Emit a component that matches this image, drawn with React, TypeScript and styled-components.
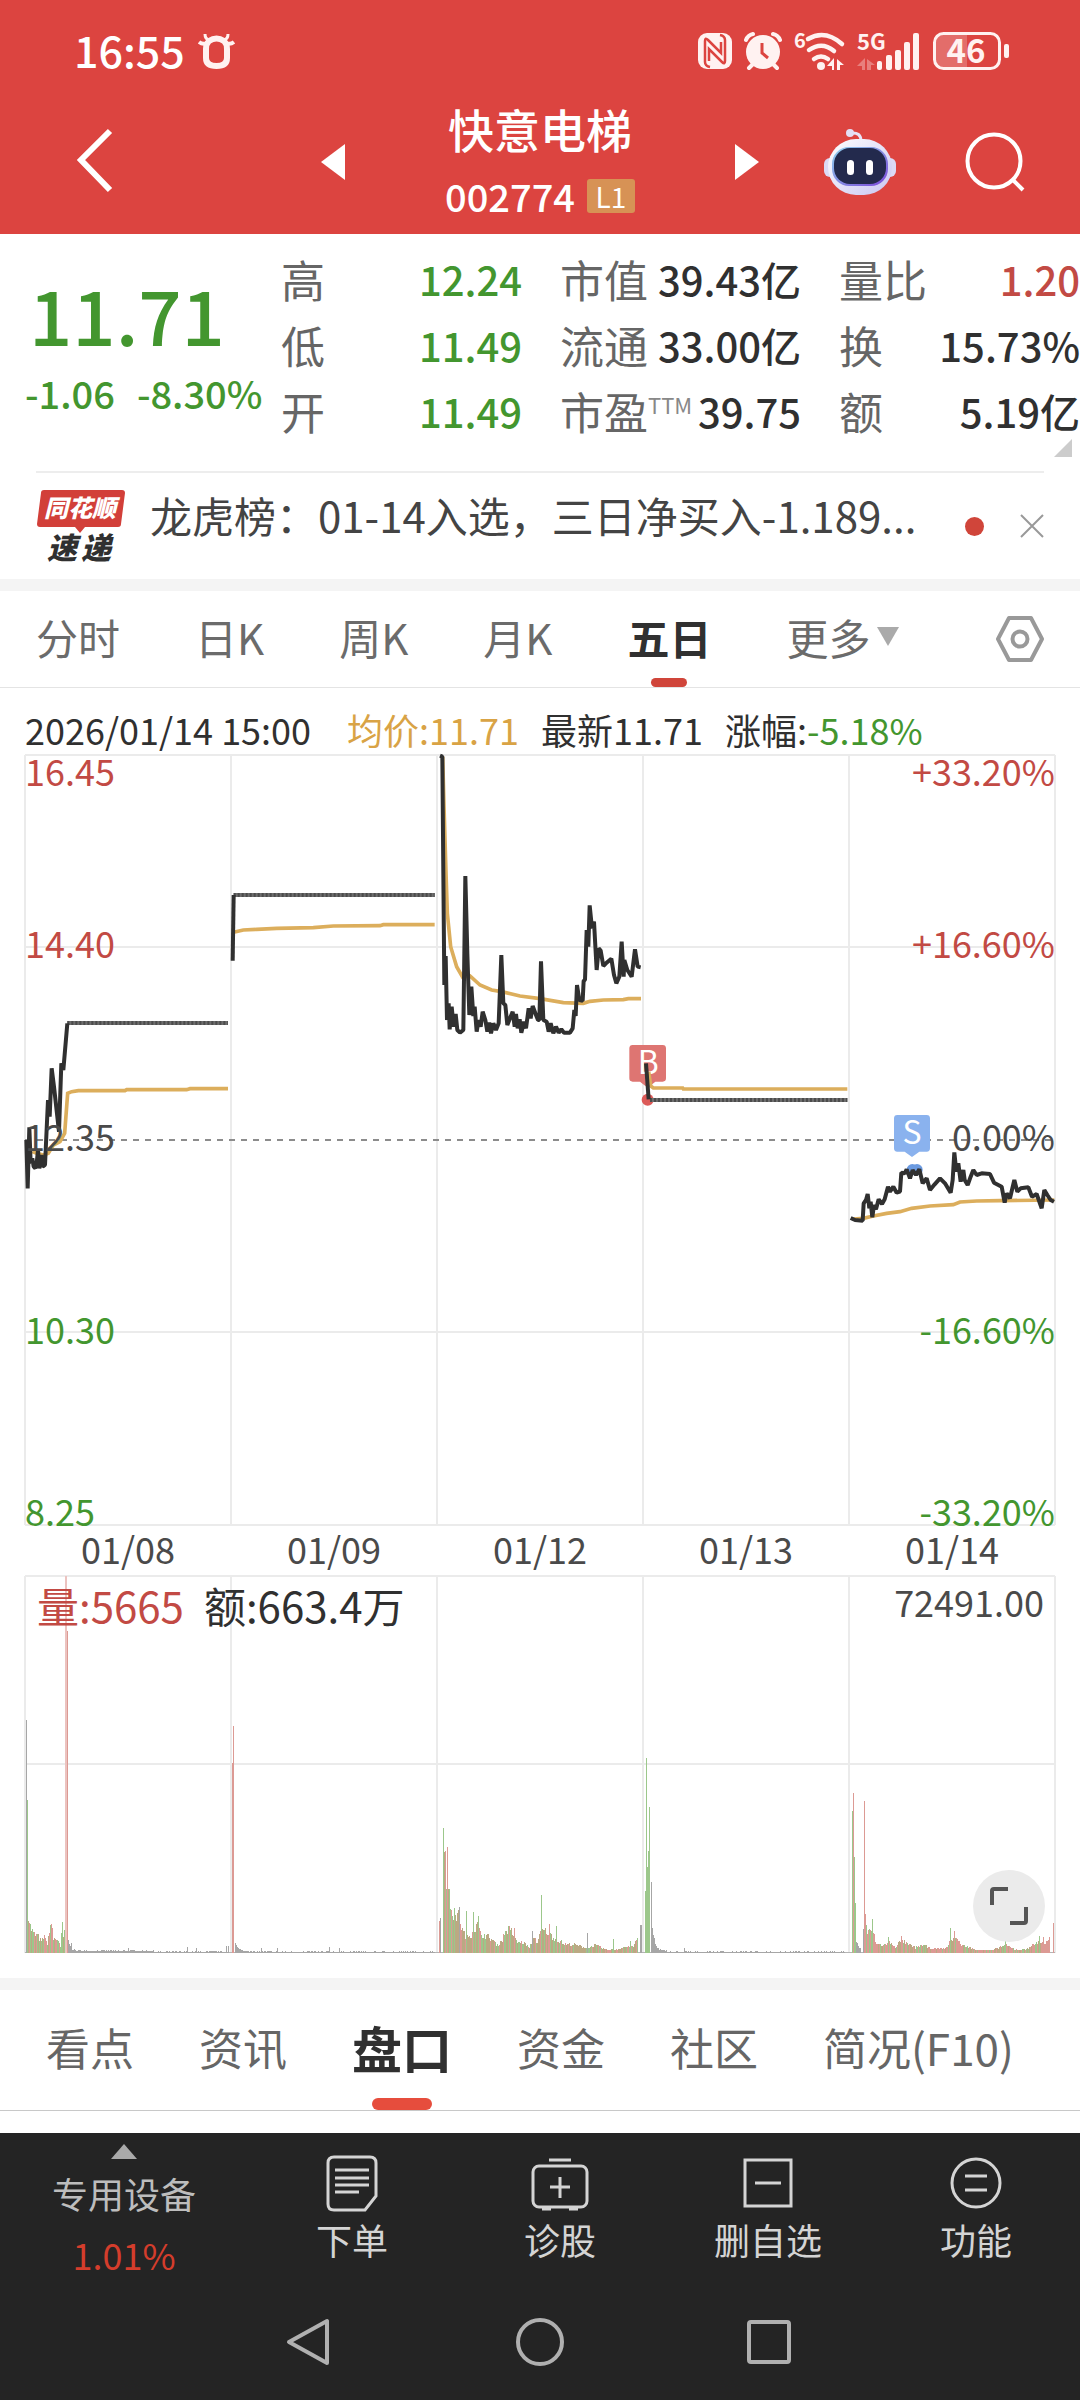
import React, { useState } from "react";
import styled, { createGlobalStyle } from "styled-components";

const RED = "#dc4440";
const UP = "#c24a44";
const DOWN = "#43962f";
const INK = "#303030";

const GlobalStyle = createGlobalStyle`
  * { box-sizing: border-box; }
  body {
    margin: 0;
    background: #fff;
    color: ${INK};
    font-family: "Noto Sans CJK SC", Roboto, sans-serif;
    font-size: 36px;
  }
  h1, dl, dd, dt, p { margin: 0; font-weight: inherit; }
  svg { display: block; flex: none; overflow: visible; }
`;

const Button = styled.button`
  display: flex;
  align-items: center;
  justify-content: center;
  padding: 0;
  border: 0;
  background: none;
  color: inherit;
  font: inherit;
  cursor: pointer;
`;

/* ---------- status bar and title ---------- */

const Top = styled.header`
  background: ${RED};
  color: #fff;
`;

const StatusBar = styled.div`
  display: flex;
  align-items: center;
  justify-content: space-between;
  height: 98px;
  padding: 4px 71px 0 74px;
`;

const StatusGroup = styled.div<{ $gap: number }>`
  display: flex;
  align-items: center;
  gap: ${(p) => p.$gap}px;
`;

const Clock = styled.span`
  padding-bottom: 4px;
  font-size: 43px;
  line-height: 44px;
  font-weight: 500;
`;

const TitleBar = styled.div`
  display: grid;
  grid-template-columns: 1fr auto 1fr;
  align-items: center;
  height: 136px;
  padding: 0 55px 8px;
  column-gap: 20px;
`;

const BackSlot = styled.div`
  display: flex;
  padding-left: 22px;
`;

const TitleActions = styled.div`
  display: flex;
  align-items: center;
  justify-content: flex-end;
  gap: 69px;
`;

const StockSwitch = styled.div`
  display: flex;
  align-items: center;
  gap: 100px;
  height: 100%;
`;

const StockTitle = styled.div`
  display: flex;
  flex-direction: column;
  align-items: center;
  align-self: flex-start;
  gap: 16px;
`;

const StockName = styled.h1`
  font-size: 46px;
  line-height: 60px;
  font-weight: 500;
`;

const StockCode = styled.div`
  display: flex;
  align-items: center;
  gap: 12px;
  font-size: 38px;
  line-height: 44px;
  font-weight: 500;
`;

const Level = styled.span`
  width: 48px;
  border-radius: 3px;
  background: #d79255;
  font-size: 28px;
  line-height: 34px;
  font-weight: 400;
  text-align: center;
`;

/* ---------- quote ---------- */

const Quote = styled.section`
  position: relative;
  display: flex;
  height: 237px;
`;

const PriceBlock = styled.div`
  display: flex;
  flex-direction: column;
  gap: 20px;
  width: 281px;
  padding: 39px 0 0 25px;
  color: ${DOWN};
`;

const Price = styled.strong`
  padding-left: 4px;
  font-size: 76px;
  line-height: 80px;
  font-weight: 500;
`;

const Change = styled.div`
  display: flex;
  gap: 22px;
  font-size: 38px;
  line-height: 40px;
  font-weight: 500;
  white-space: nowrap;
`;

const Stats = styled.dl`
  display: grid;
  flex: 1;
  grid-template-columns: repeat(3, 1fr);
  grid-auto-rows: 66px;
  column-gap: 38px;
  padding-top: 12px;
`;

const Stat = styled.div`
  display: flex;
  align-items: center;
  justify-content: space-between;
  line-height: 66px;
  white-space: nowrap;
`;

const StatLabel = styled.dt`
  display: flex;
  color: #666;
  font-size: 44px;
`;

const Sup = styled.sup`
  color: #888;
  font-size: 22px;
  line-height: 52px;
`;

const StatValue = styled.dd<{ $color?: string }>`
  color: ${(p) => p.$color || INK};
  font-size: 40px;
  font-weight: 500;
`;

const Corner = styled.svg`
  position: absolute;
  right: 8px;
  bottom: 14px;
`;

const News = styled.section`
  display: flex;
  align-items: center;
  height: 108px;
  margin: 0 36px;
  border-top: 2px solid #ededed;
`;

const NewsLink = styled.a`
  flex: 1;
  min-width: 0;
  margin: 0 30px 0 24px;
  padding-bottom: 22px;
  color: #444;
  font-size: 42px;
  line-height: 60px;
  text-decoration: none;
  white-space: nowrap;
`;

const Dot = styled.span`
  width: 19px;
  height: 19px;
  margin-right: 36px;
  border-radius: 50%;
  background: #d0453a;
`;

const Band = styled.div`
  height: 12px;
  background: #f4f4f4;
`;

/* ---------- tabs ---------- */

const PeriodTabs = styled.nav`
  display: flex;
  gap: 75px;
  height: 97px;
  padding: 0 36px;
  border-bottom: 1px solid #e4e4e4;
`;

const PeriodTab = styled(Button)<{ $active?: boolean }>`
  position: relative;
  gap: 7px;
  padding-bottom: 6px;
  color: ${(p) => (p.$active ? INK : "#6b6b6b")};
  font-size: 42px;
  font-weight: ${(p) => (p.$active ? 700 : 400)};
  white-space: nowrap;
  &::after {
    content: "";
    position: absolute;
    left: calc(50% - 18px);
    bottom: 0;
    width: 36px;
    height: 9px;
    border-radius: 5px;
    background: ${(p) => (p.$active ? "#d0453a" : "transparent")};
  }
`;

const Settings = styled(Button)`
  margin-left: auto;
`;

const InfoTabs = styled.nav`
  display: flex;
  gap: 65px;
  height: 121px;
  padding: 0 46px;
  border-bottom: 1px solid #c8c8c8;
`;

const InfoTab = styled(Button)<{ $active?: boolean }>`
  position: relative;
  padding-bottom: 6px;
  color: ${(p) => (p.$active ? INK : "#666")};
  font-size: ${(p) => (p.$active ? 50 : 44)}px;
  font-weight: ${(p) => (p.$active ? 700 : 400)};
  white-space: nowrap;
  &::after {
    content: "";
    position: absolute;
    left: calc(50% - 30px);
    bottom: 0;
    width: 60px;
    height: 12px;
    border-radius: 6px;
    background: ${(p) => (p.$active ? "#e64d3d" : "transparent")};
  }
`;

/* ---------- charts ---------- */

const ChartPanel = styled.section`
  padding: 20px 25px 25px;
`;

const Readout = styled.div`
  display: flex;
  gap: 22px;
  height: 47px;
  line-height: 42px;
  white-space: nowrap;
`;

const ReadoutItem = styled.span<{ $color?: string }>`
  color: ${(p) => p.$color || INK};
`;

const ReadoutTime = styled.time`
  margin-right: 14px;
`;

const Plot = styled.div`
  position: relative;
  & > svg { width: 100%; height: auto; }
`;

const AxisLabel = styled.span<{ $top: number; $color: string; $right?: boolean }>`
  position: absolute;
  top: ${(p) => p.$top}%;
  ${(p) => (p.$right ? "right: 0;" : "left: 0;")}
  margin-top: -21px;
  color: ${(p) => p.$color};
  line-height: 36px;
`;

const Dates = styled.div`
  display: grid;
  grid-template-columns: repeat(5, 1fr);
  height: 51px;
  color: #4a4a4a;
  line-height: 47px;
  text-align: center;
`;

const VolumeHead = styled.div`
  position: absolute;
  inset: 0 11px auto 12px;
  display: flex;
  gap: 20px;
  font-size: 42px;
  line-height: 58px;
`;

const VolumeMax = styled.span`
  margin-left: auto;
  color: #4a4a4a;
  font-size: 36px;
  line-height: 50px;
`;

const Expand = styled(Button)`
  position: absolute;
  right: 10px;
  bottom: 11px;
  width: 72px;
  height: 72px;
  border-radius: 50%;
  background: #ebebeb;
`;

/* ---------- bottom dock ---------- */

const Dock = styled.footer`
  margin-top: 22px;
  background: #242424;
  color: #d4d4d4;
`;

const DockRow = styled.div`
  display: grid;
  grid-template-columns: 248fr 208fr 208fr 208fr 208fr;
  height: 150px;
`;

const DockButton = styled(Button)`
  flex-direction: column;
  justify-content: flex-start;
  gap: 4px;
  padding-top: 20px;
  font-size: 36px;
  line-height: 44px;
`;

const IndexButton = styled(Button)`
  flex-direction: column;
  justify-content: flex-start;
  gap: 12px;
  padding-top: 11px;
  color: #bdbdbd;
  line-height: 44px;
`;

const IndexChange = styled.span`
  padding-top: 5px;
  color: #d43d2c;
`;

const SystemNav = styled.nav`
  display: flex;
  justify-content: center;
  gap: 183px;
  height: 117px;
  padding-right: 4px;
`;

/* ---------- price data, in thirds of a pixel ---------- */

const GRID_X = [0, 206, 412, 618, 824, 1030];

const DAYS = [
  {
    shift: "translate(-25 -15) scale(.33333)",
    price:
      "79,1200 83,1345 88,1162 92,1270 97,1255 101,1280 106,1285 110,1270 114,1230 118,1285 124,1245 128,1280 135,1275 144,1080 149,1130 155,985 162,1040 177,1175 184,970 190,990 202,850",
    flat: [202, 684, 849],
    avg: "97,1235 110,1240 130,1245 145,1240 160,1215 180,1205 194,1180 203,1060 215,1055 235,1052 375,1052 380,1049 560,1049 570,1046 684,1046",
  },
  {
    shift: "translate(-25 -15) scale(.33333)",
    price: "698,662 701,465",
    flat: [701, 1304, 465],
    avg: "704,576 730,570 770,568 830,565 940,563 1000,558 1140,557 1150,554 1304,554",
  },
  {
    shift: "translate(395 -15) scale(.33333)",
    price:
      "60,47 67,50 70,400 73,735 77,648 81,840 86,790 89,868 95,800 101,860 107,822 112,870 120,878 130,870 136,408 142,640 148,825 154,740 160,828 164,800 170,875 176,840 182,860 188,815 196,840 202,875 208,848 213,880 220,850 228,870 236,850 244,645 250,790 256,795 262,855 270,835 278,815 284,860 288,822 293,865 299,838 304,878 312,845 318,865 326,805 332,835 338,798 348,825 354,840 358,840 363,664 370,840 380,845 386,875 392,850 400,880 408,860 416,878 424,868 432,878 450,878 458,865 463,810 467,828 471,735 478,780 488,782 491,722 495,720 500,570 505,620 509,496 516,565 522,545 530,690 536,625 542,632 550,678 558,670 574,656 582,705 589,730 598,710 605,605 611,710 613,660 622,690 635,710 645,628 653,680 662,682",
    avg: "68,50 72,200 78,400 82,520 92,620 110,680 128,712 150,708 180,735 215,750 245,755 300,768 360,776 430,788 490,790 510,784 550,780 610,779 625,776 663,776",
  },
  {
    shift: "translate(575 245) scale(.33333)",
    price: "138,190 146,298",
    flat: [150, 742, 300],
    avg: "146,215 152,258 160,264 248,264 250,267 742,267",
  },
  {
    shift: "translate(575 245) scale(.33333)",
    price:
      "752,654 765,660 788,662 791,610 798,600 803,582 808,625 812,605 817,652 822,615 828,628 836,598 846,612 854,598 864,560 870,575 880,560 890,578 900,575 904,518 914,520 920,508 930,535 938,510 948,525 958,508 968,550 980,535 990,570 1004,553 1020,535 1035,550 1052,578 1058,540 1063,457 1069,515 1075,490 1082,545 1090,510 1094,540 1103,555 1112,530 1120,510 1130,525 1145,520 1170,522 1182,548 1205,560 1214,608 1220,580 1230,595 1243,540 1252,575 1262,565 1285,562 1296,590 1310,582 1325,625 1333,570 1342,585 1352,600 1362,605",
    avg: "760,657 790,655 820,648 860,640 900,635 935,625 990,618 1060,614 1080,606 1130,603 1200,602 1363,600",
  },
];

function PriceChart() {
  return (
    <svg viewBox="0 0 1030 770" role="img" aria-label="五日走势">
      <g stroke="#ebebeb" strokeWidth="2">
        {[0, 192, 577, 770].map((y) => (
          <line key={y} x1="0" x2="1030" y1={y} y2={y} />
        ))}
        {GRID_X.map((x) => (
          <line key={x} x1={x} x2={x} y1="0" y2="770" />
        ))}
      </g>
      <line x1="0" x2="1030" y1="385" y2="385" stroke="#8c8c8c" strokeWidth="2" strokeDasharray="6 6" />
      <g transform="translate(575 245) scale(.33333)">
        <path
          d="M98 135h90q10 0 10 10v90q0 10-10 10h-22l-23 18-23-18h-22q-10 0-10-10v-90q0-10 10-10z"
          fill="#de7572"
        />
        <text x="145" y="221" fill="#fff" fontSize="96" textAnchor="middle">B</text>
        <circle cx="143" cy="299" r="18" fill="#dc5a58" />
        <path
          d="M892 345h88q10 0 10 10v90q0 10-10 10h-22l-22 16-22-16h-22q-10 0-10-10v-90q0-10 10-10z"
          fill="#8ab2ee"
        />
        <text x="936" y="432" fill="#fff" fontSize="96" textAnchor="middle">S</text>
        <circle cx="937" cy="509" r="17" fill="#6b9ae0" />
        <circle cx="951" cy="509" r="17" fill="#6b9ae0" />
      </g>
      {DAYS.map((d, i) => (
        <g key={i} transform={d.shift} fill="none">
          <polyline points={d.avg} stroke="#dcae5c" strokeWidth="11" />
          {d.flat && (
            <>
              <line x1={d.flat[0]} x2={d.flat[1]} y1={d.flat[2]} y2={d.flat[2]} stroke="#6e6e6e" strokeWidth="12" />
              <line
                x1={d.flat[0]}
                x2={d.flat[1]}
                y1={d.flat[2]}
                y2={d.flat[2]}
                stroke="#4c4c4c"
                strokeWidth="12"
                strokeDasharray="6 6"
              />
            </>
          )}
          <polyline points={d.price} stroke="#303030" strokeWidth="12" strokeLinejoin="bevel" />
        </g>
      ))}
    </svg>
  );
}

/* ---------- volume data ---------- */

type Tone = "r" | "g" | "k" | "p" | "b";
const TONES: Record<Tone, string> = {
  r: "#dc9a94",
  g: "#9cc78b",
  k: "#a6a6a6",
  p: "#ecc3c0",
  b: "#bba983",
};

/* [x, height] outline of the crowded bars, and which tones they mix */
const OUTLINES: { mix: Tone[]; points: [number, number][] }[] = [
  {
    mix: ["r", "g", "b"],
    points: [[3, 46], [5, 30], [8, 22], [12, 20], [16, 13], [20, 20], [22, 8], [24, 28], [26, 34], [28, 16], [33, 15], [35, 6], [37, 34], [38, 18], [41, 30]],
  },
  { mix: ["k"], points: [[43, 14], [46, 4], [52, 2], [204, 1]] },
  { mix: ["k"], points: [[210, 10], [214, 3], [226, 1], [410, 1]] },
  {
    mix: ["g", "r", "b", "b"],
    points: [
      [418, 120], [420, 100], [422, 74], [425, 56], [428, 44], [433, 42], [437, 26], [441, 18], [446, 22], [452, 32],
      [455, 22], [462, 19], [468, 14], [472, 9], [477, 16], [481, 27], [486, 25], [491, 13], [500, 11], [504, 5],
      [508, 20], [512, 12], [516, 26], [522, 24], [530, 16], [540, 10], [551, 9], [562, 6], [570, 9], [580, 4],
      [592, 4], [600, 7], [608, 7], [613, 20],
    ],
  },
  { mix: ["k"], points: [[627, 26], [631, 8], [634, 3], [644, 1], [820, 1]] },
  { mix: ["k"], points: [[831, 12], [834, 6], [836, 6]] },
  {
    mix: ["g", "r", "b", "r"],
    points: [
      [840, 46], [842, 22], [847, 28], [851, 10], [858, 9], [864, 12], [870, 7], [876, 15], [882, 10], [890, 6],
      [897, 9], [906, 5], [920, 5], [929, 20], [936, 9], [950, 4], [966, 3], [980, 9], [990, 4], [1000, 4],
      [1006, 8], [1014, 13], [1020, 11], [1025, 18],
    ],
  },
];

const SPIKES: [number, number, Tone, number?][] = [
  [1, 233, "k"], [2, 153, "g"], [40, 377, "p", 2], [42, 322, "r"], [46, 10, "k"],
  [103, 5, "k"], [162, 6, "k"], [171, 5, "k"], [201, 7, "k"], [203, 7, "k"],
  [207, 190, "r"], [208, 227, "r"], [236, 5, "k"], [252, 5, "k"], [304, 6, "k"], [314, 5, "k"],
  [414, 32, "r"], [415, 35, "k"], [418, 125, "g"], [420, 102, "r"], [422, 106, "r"], [434, 46, "k"],
  [441, 42, "g"], [448, 41, "g"], [453, 37, "g"], [484, 27, "r"], [489, 25, "r"], [507, 22, "k"], [516, 58, "g"],
  [524, 29, "r"], [531, 27, "g"], [562, 20, "k"], [588, 14, "g"], [605, 12, "g"], [615, 28, "k", 2],
  [620, 62, "g"], [621, 195, "g"], [622, 86, "g"], [623, 102, "g"], [624, 146, "g"], [626, 71, "k"], [659, 5, "k"],
  [827, 142, "g"], [828, 160, "r"], [829, 96, "g"], [830, 50, "g"], [838, 24, "k"], [839, 152, "r"],
  [847, 34, "g"], [863, 16, "g"], [876, 17, "r"], [925, 25, "g"], [929, 22, "r"], [980, 14, "g"],
  [1014, 17, "g"], [1018, 16, "r"], [1028, 30, "r"],
];

function buildBars() {
  let seed = 7;
  const random = () => {
    seed = (seed * 16807) % 2147483647;
    return seed / 2147483647;
  };
  const bars: { x: number; h: number; tone: Tone; w: number }[] = [];
  OUTLINES.forEach(({ mix, points }) => {
    for (let i = 0; i < points.length - 1; i++) {
      const [x0, h0] = points[i];
      const [x1, h1] = points[i + 1];
      for (let x = x0; x < x1; x++) {
        const level = h0 + ((h1 - h0) * (x - x0)) / (x1 - x0);
        const h = level <= 3 ? Math.max(1, Math.round(level)) + (random() > 0.7 ? 1 : 0) : Math.round(level * (0.7 + random() * 0.35));
        bars.push({ x, h, tone: mix[Math.floor(random() * mix.length)], w: 1 });
      }
    }
  });
  SPIKES.forEach(([x, h, tone, w = 1]) => bars.push({ x, h, tone, w }));
  return bars;
}

const BARS = buildBars();

function VolumeChart() {
  return (
    <svg viewBox="0 0 1030 377" role="img" aria-label="成交量">
      <g stroke="#ebebeb" strokeWidth="2">
        <line x1="0" x2="1030" y1="0" y2="0" />
        <line x1="0" x2="1030" y1="188" y2="188" />
        {GRID_X.map((x) => (
          <line key={x} x1={x} x2={x} y1="0" y2="377" />
        ))}
      </g>
      <rect x="0" y="376" width="1030" height="1" fill="#b4b4b4" />
      {BARS.map((b, i) => (
        <rect key={i} x={b.x} y={377 - b.h} width={b.w} height={b.h} fill={TONES[b.tone]} />
      ))}
    </svg>
  );
}

/* ---------- icons ---------- */

const CowIcon = () => (
  <svg width="35" height="36" viewBox="0 0 35 36" fill="none" stroke="#fff2f1">
    <path d="M6 1q0 5 4 6M29 1q0 5-4 6" strokeWidth="3" />
    <path d="M0 9q4 3 8 1M35 9q-4 3-8 1" strokeWidth="4" />
    <path d="M10 8Q17.500 3 25 8q3 3 3 8v9q0 8-10.500 8T7 25v-9q0-5 3-8z" strokeWidth="6" />
  </svg>
);

const NfcIcon = () => (
  <svg width="34" height="36" viewBox="0 0 34 36">
    <rect width="34" height="36" rx="9" fill="#fff2f1" />
    <path
      d="M12 34q-5-1-5-5V8q0-4 3-1l13 13V9M22 2q5 1 5 5v21q0 4-3 1L11 16v12"
      fill="none"
      stroke={RED}
      strokeWidth="2.500"
    />
  </svg>
);

const AlarmIcon = () => (
  <svg width="38" height="38" viewBox="0 0 38 38" fill="none" stroke="#fff2f1" strokeLinecap="round">
    <circle cx="19" cy="20" r="17" fill="#fff2f1" stroke="none" />
    <path d="M2 8q2-5 7-6M36 8q-2-5-7-6" strokeWidth="4" />
    <path d="m9 32-4 4M29 32l4 4" strokeWidth="4" />
    <path d="M18 11v10l6 5" stroke={RED} strokeWidth="3" strokeLinecap="butt" />
  </svg>
);

const WifiIcon = () => (
  <svg width="51" height="40" viewBox="0 0 51 40" fill="none" stroke="#fff2f1" strokeLinecap="round">
    <text x="0" y="17" fontSize="20" fontWeight="700" fill="#fff2f1" stroke="none">6</text>
    <path d="M14 8q17-10 34 5M15 19q13-9 25 1M20 28q7-5 14 0" strokeWidth="4.500" />
    <circle cx="27" cy="35" r="4" fill="#fff2f1" stroke="none" />
    <path d="M40 27v12h-2v-4h-5zM43 39V28l7 6h-4v5z" fill="#fff2f1" stroke="none" />
  </svg>
);

const SignalIcon = () => (
  <svg width="64" height="40" viewBox="0 0 64 40" fill="#fff2f1">
    <text x="0" y="19" fontSize="22" fontWeight="700">5G</text>
    <path d="M8 27v12H5v-4H0zM10 39V28l8 6h-4v5z" opacity=".35" />
    <rect x="20" y="30" width="5" height="9" rx="2" />
    <rect x="29" y="24" width="6" height="15" rx="2" />
    <rect x="38" y="19" width="6" height="20" rx="2" />
    <rect x="47" y="11" width="6" height="28" rx="2" />
    <rect x="56" y="2" width="6" height="37" rx="2" />
  </svg>
);

const BatteryIcon = () => (
  <svg width="76" height="38" viewBox="0 0 76 38">
    <path d="M10 3h24v32H10q-7 0-7-7V10q0-7 7-7z" fill="#fff" opacity=".22" />
    <rect x="1.500" y="1.500" width="65" height="35" rx="9" fill="none" stroke="#fff2f1" strokeWidth="3" />
    <rect x="71" y="12" width="5" height="14" rx="2" fill="#fff2f1" />
    <text x="33" y="31" textAnchor="middle" fontSize="33" fontWeight="700" fill="#fff2f1">46</text>
  </svg>
);

const Arrow = ({ flip }: { flip?: boolean }) => (
  <svg width="24" height="36" viewBox="0 0 24 36" fill="#fff">
    <path d={flip ? "M0 0v36l24-18z" : "M24 0v36L0 18z"} />
  </svg>
);

const RobotIcon = () => (
  <svg width="72" height="66" viewBox="0 0 72 66">
    <defs>
      <linearGradient id="shell" x1="0" y1="0" x2="1" y2="1">
        <stop offset="0" stopColor="#fff" />
        <stop offset="1" stopColor="#c9c6f2" />
      </linearGradient>
      <linearGradient id="visor" x1="0" y1="0" x2="1" y2="1">
        <stop offset="0" stopColor="#8fd2ee" />
        <stop offset="1" stopColor="#7a48d8" />
      </linearGradient>
    </defs>
    <path d="M27 4q10-1 10 8" fill="none" stroke="#e8e4f8" strokeWidth="3" />
    <circle cx="26" cy="4" r="4" fill="#e3dff6" />
    <rect x="0" y="29" width="72" height="19" rx="6" fill="#dcdaf6" />
    <rect x="4" y="10" width="64" height="56" rx="28" fill="url(#shell)" />
    <rect x="8" y="18" width="56" height="39" rx="17" fill="url(#visor)" />
    <rect x="10" y="19" width="52" height="36" rx="16" fill="#232a4d" />
    <rect x="23" y="31" width="7" height="15" rx="3.500" fill="#fff" />
    <rect x="42" y="31" width="7" height="15" rx="3.500" fill="#fff" />
  </svg>
);

const ExpressLogo = () => (
  <svg width="90" height="74" viewBox="0 0 90 74" role="img" aria-label="同花顺速递">
    <path d="M8 1h78q3 0 3 3l-4 31q0 3-3 3H49l-5 6-5-6H4q-3 0-3-3L5 4q0-3 3-3z" fill="#d23f39" />
    <text x="44" y="28" textAnchor="middle" fontSize="24" fontWeight="900" fontStyle="italic" fill="#fff">同花顺</text>
    <text x="11" y="70" fontSize="30" fontWeight="900" fontStyle="italic" fill="#303030">速</text>
    <text x="45" y="70" fontSize="30" fontWeight="900" fontStyle="italic" fill="#303030">递</text>
  </svg>
);

/* ---------- page ---------- */

const STATS: { label: string; sup?: string; value: string; color?: string }[] = [
  { label: "高", value: "12.24", color: DOWN },
  { label: "市值", value: "39.43亿" },
  { label: "量比", value: "1.20", color: UP },
  { label: "低", value: "11.49", color: DOWN },
  { label: "流通", value: "33.00亿" },
  { label: "换", value: "15.73%" },
  { label: "开", value: "11.49", color: DOWN },
  { label: "市盈", sup: "TTM", value: "39.75" },
  { label: "额", value: "5.19亿" },
];

const AXIS: { top: number; price: string; pct: string; color: string }[] = [
  { top: 2.3, price: "16.45", pct: "+33.20%", color: UP },
  { top: 24.7, price: "14.40", pct: "+16.60%", color: UP },
  { top: 49.8, price: "12.35", pct: "0.00%", color: "#4a4a4a" },
  { top: 74.8, price: "10.30", pct: "-16.60%", color: DOWN },
  { top: 98.4, price: "8.25", pct: "-33.20%", color: DOWN },
];

const PERIODS = ["分时", "日K", "周K", "月K", "五日", "更多"];
const SECTIONS = ["看点", "资讯", "盘口", "资金", "社区", "简况(F10)"];

export default function App() {
  const [period, setPeriod] = useState("五日");
  const [section, setSection] = useState("盘口");

  return (
    <>
      <GlobalStyle />
      <Top>
        <StatusBar>
          <StatusGroup $gap={14}>
            <Clock>16:55</Clock>
            <CowIcon />
          </StatusGroup>
          <StatusGroup $gap={12}>
            <NfcIcon />
            <AlarmIcon />
            <WifiIcon />
            <SignalIcon />
            <BatteryIcon />
          </StatusGroup>
        </StatusBar>
        <TitleBar>
          <BackSlot>
            <Button aria-label="返回">
              <svg width="36" height="66" viewBox="0 0 36 66" fill="none" stroke="#fff" strokeWidth="6">
                <path d="M33 2 4 31l29 30" />
              </svg>
            </Button>
          </BackSlot>
          <StockSwitch>
            <Button aria-label="上一只"><Arrow /></Button>
            <StockTitle>
              <StockName>快意电梯</StockName>
              <StockCode>002774<Level>L1</Level></StockCode>
            </StockTitle>
            <Button aria-label="下一只"><Arrow flip /></Button>
          </StockSwitch>
          <TitleActions>
            <Button aria-label="智能助手"><RobotIcon /></Button>
            <Button aria-label="搜索">
              <svg width="60" height="60" viewBox="0 0 60 60" fill="none" stroke="#fff" strokeWidth="4">
                <circle cx="29" cy="29" r="26.500" />
                <path d="m47 47 11 11" />
              </svg>
            </Button>
          </TitleActions>
        </TitleBar>
      </Top>

      <Quote>
        <PriceBlock>
          <Price>11.71</Price>
          <Change><span>-1.06</span><span>-8.30%</span></Change>
        </PriceBlock>
        <Stats>
          {STATS.map((s) => (
            <Stat key={s.label}>
              <StatLabel>{s.label}{s.sup && <Sup>{s.sup}</Sup>}</StatLabel>
              <StatValue $color={s.color}>{s.value}</StatValue>
            </Stat>
          ))}
        </Stats>
        <Corner width="18" height="18" viewBox="0 0 18 18"><path d="M18 0v18H0z" fill="#ccc" /></Corner>
      </Quote>

      <News>
        <ExpressLogo />
        <NewsLink href="#news">龙虎榜：01-14入选，三日净买入-1.189...</NewsLink>
        <Dot />
        <Button aria-label="关闭">
          <svg width="24" height="24" viewBox="0 0 24 24" stroke="#999" strokeWidth="2">
            <path d="m1 1 22 22M23 1 1 23" />
          </svg>
        </Button>
      </News>

      <Band />

      <PeriodTabs>
        {PERIODS.map((p) => (
          <PeriodTab key={p} $active={p === period} onClick={() => setPeriod(p)}>
            {p}
            {p === "更多" && (
              <svg width="22" height="19" viewBox="0 0 22 19"><path d="M0 0h22L11 19z" fill="#aaa" /></svg>
            )}
          </PeriodTab>
        ))}
        <Settings aria-label="设置">
          <svg width="48" height="46" viewBox="0 0 48 46" fill="none" stroke="#999" strokeWidth="4" strokeLinejoin="round">
            <path d="M13 2h22l11 21-11 21H13L2 23z" />
            <circle cx="24" cy="23" r="7.500" />
          </svg>
        </Settings>
      </PeriodTabs>

      <ChartPanel>
        <Readout>
          <ReadoutTime>2026/01/14 15:00</ReadoutTime>
          <ReadoutItem $color="#d9a345">均价:11.71</ReadoutItem>
          <ReadoutItem>最新11.71</ReadoutItem>
          <span>涨幅:<ReadoutItem $color={DOWN}>-5.18%</ReadoutItem></span>
        </Readout>
        <Plot>
          <PriceChart />
          {AXIS.map((a) => (
            <React.Fragment key={a.price}>
              <AxisLabel $top={a.top} $color={a.color}>{a.price}</AxisLabel>
              <AxisLabel $top={a.top} $color={a.color} $right>{a.pct}</AxisLabel>
            </React.Fragment>
          ))}
        </Plot>
        <Dates>
          {["01/08", "01/09", "01/12", "01/13", "01/14"].map((d) => (
            <span key={d}>{d}</span>
          ))}
        </Dates>
        <Plot>
          <VolumeChart />
          <VolumeHead>
            <ReadoutItem $color={UP}>量:5665</ReadoutItem>
            <ReadoutItem>额:663.4万</ReadoutItem>
            <VolumeMax>72491.00</VolumeMax>
          </VolumeHead>
          <Expand aria-label="全屏">
            <svg width="38" height="38" viewBox="0 0 38 38" fill="none" stroke="#555" strokeWidth="4">
              <path d="M2 18V4q0-2 2-2h14M36 20v14q0 2-2 2H20" />
            </svg>
          </Expand>
        </Plot>
      </ChartPanel>

      <Band />

      <InfoTabs>
        {SECTIONS.map((s) => (
          <InfoTab key={s} $active={s === section} onClick={() => setSection(s)}>{s}</InfoTab>
        ))}
      </InfoTabs>

      <Dock>
        <DockRow>
          <IndexButton>
            <svg width="26" height="15" viewBox="0 0 26 15"><path d="M13 0 26 15H0z" fill="#aaa" /></svg>
            <span>专用设备</span>
            <IndexChange>1.01%</IndexChange>
          </IndexButton>
          <DockButton>
            <svg width="60" height="60" viewBox="0 0 60 60" fill="none" stroke="#d4d4d4" strokeWidth="3">
              <path d="M12 4h36q6 0 6 6v33L43 57H12q-6 0-6-6V10q0-6 6-6z" />
              <path d="M13 17h34M13 25h34M13 32h34M13 39h24" />
            </svg>
            下单
          </DockButton>
          <DockButton>
            <svg width="60" height="60" viewBox="0 0 60 60" fill="none" stroke="#d4d4d4" strokeWidth="3">
              <rect x="3" y="13" width="54" height="41" rx="6" />
              <path d="M19 7h22M12 56h9M39 56h9M30 24v21M20 34h20" />
            </svg>
            诊股
          </DockButton>
          <DockButton>
            <svg width="60" height="60" viewBox="0 0 60 60" fill="none" stroke="#d4d4d4" strokeWidth="3">
              <rect x="7" y="7" width="46" height="46" />
              <path d="M17 30h26" />
            </svg>
            删自选
          </DockButton>
          <DockButton>
            <svg width="60" height="60" viewBox="0 0 60 60" fill="none" stroke="#d4d4d4" strokeWidth="3">
              <circle cx="30" cy="30" r="24" />
              <path d="M19 23h22M19 37h22" />
            </svg>
            功能
          </DockButton>
        </DockRow>
        <SystemNav>
          <Button aria-label="后退">
            <svg width="48" height="48" viewBox="0 0 48 48" fill="none" stroke="#b0b0b0" strokeWidth="4" strokeLinejoin="round">
              <path d="M42 3v42L4 24z" />
            </svg>
          </Button>
          <Button aria-label="主页">
            <svg width="48" height="48" viewBox="0 0 48 48" fill="none" stroke="#b0b0b0" strokeWidth="4">
              <circle cx="24" cy="24" r="22" />
            </svg>
          </Button>
          <Button aria-label="最近任务">
            <svg width="44" height="44" viewBox="0 0 44 44" fill="none" stroke="#b0b0b0" strokeWidth="4">
              <rect x="2" y="2" width="40" height="40" rx="2" />
            </svg>
          </Button>
        </SystemNav>
      </Dock>
    </>
  );
}
